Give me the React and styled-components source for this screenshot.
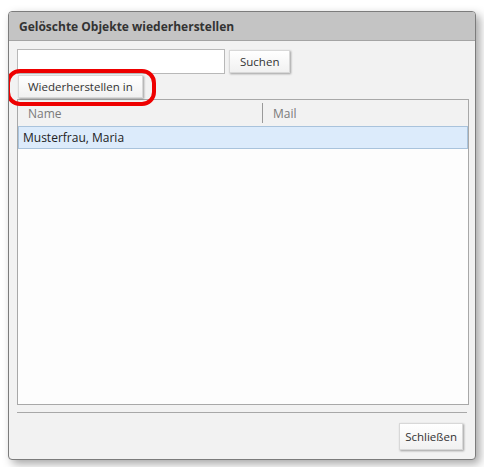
import styled, { createGlobalStyle } from 'styled-components';

const GlobalStyle = createGlobalStyle`
  html, body { margin: 0; padding: 0; background: #ffffff; }
  body { font-family: "Open Sans", "DejaVu Sans", sans-serif; }
`;

const Page = styled.div`
  width: 484px;
  height: 467px;
  padding: 11px 8px 0 8px;
  box-sizing: border-box;
`;

const Dialog = styled.div`
  width: 468px;
  height: 449px;
  box-sizing: border-box;
  border: 1px solid #7c7c7c;
  border-radius: 4px;
  background: #f2f2f2;
  box-shadow: 4px 4px 10px rgba(0, 0, 0, 0.35);
  display: flex;
  flex-direction: column;
  overflow: hidden;
`;

const Header = styled.div`
  height: 28px;
  background: #c4c4c4;
  border-bottom: 1px solid #a4a4a4;
  display: flex;
  align-items: center;
  padding-left: 10px;
  font-size: 12px;
  font-weight: 700;
  color: #333;
  flex-shrink: 0;
`;

const Body = styled.div`
  flex: 1;
  display: flex;
  flex-direction: column;
  padding: 8px 6px 8px 8px;
`;

const SearchRow = styled.div`
  display: flex;
  align-items: center;
  gap: 4px;
`;

const Input = styled.input`
  width: 208px;
  height: 25px;
  box-sizing: border-box;
  border: 1px solid #b8b8b8;
  background: #fff;
  outline: none;
`;

const Button = styled.button`
  height: ${(p) => p.h || 23}px;
  padding: 0 ${(p) => p.px || 10}px;
  box-sizing: border-box;
  border: 1px solid #d8d8d8;
  background: linear-gradient(#ffffff, #f1f1f1);
  box-shadow: 1px 1px 2px rgba(0, 0, 0, 0.35);
  font-family: "Open Sans", "DejaVu Sans", sans-serif;
  font-size: 11.5px;
  color: #333;
  cursor: pointer;
`;

const RestoreWrap = styled.div`
  position: relative;
  z-index: 2;
  margin: 1px 0 0 1px;
  align-self: flex-start;
  display: flex;
`;

const Highlight = styled.div`
  position: absolute;
  z-index: 3;
  left: -12px;
  top: -6px;
  width: 150px;
  height: 37px;
  box-sizing: border-box;
  border: 4px solid #ee0000;
  border-radius: 14px;
  pointer-events: none;
`;

const Table = styled.div`
  margin-top: 1px;
  width: 452px;
  height: 306px;
  box-sizing: border-box;
  border: 1px solid #a8a8a8;
  background: #fdfdfd;
  display: flex;
  flex-direction: column;
`;

const HeadRow = styled.div`
  height: 26px;
  display: grid;
  grid-template-columns: 245px 1fr;
  background: #f2f2f2;
  flex-shrink: 0;
`;

const HeadCell = styled.div`
  display: flex;
  align-items: center;
  padding-left: ${(p) => p.pl || 10}px;
  font-size: 12px;
  color: #7a7a7a;
  border-right: ${(p) => (p.divider ? '1px solid #9a9a9a' : 'none')};
  margin: 3px 0;
`;

const Row = styled.div`
  height: 23px;
  box-sizing: border-box;
  display: flex;
  align-items: center;
  padding-left: 4px;
  background: #dcebfb;
  border: 1px solid #a9c3dc;
  font-size: 12px;
  color: #222;
`;

const Separator = styled.div`
  margin: 7px 2px 0 0;
  border-top: 1px solid #a8a8a8;
`;

const Footer = styled.div`
  display: flex;
  justify-content: flex-end;
  padding: 10px 6px 0 0;
`;

export default function App() {
  return (
    <Page>
      <GlobalStyle />
      <Dialog>
        <Header>Gelöschte Objekte wiederherstellen</Header>
        <Body>
          <SearchRow>
            <Input />
            <Button>Suchen</Button>
          </SearchRow>
          <RestoreWrap>
            <Button px={9}>Wiederherstellen in</Button>
            <Highlight />
          </RestoreWrap>
          <Table>
            <HeadRow>
              <HeadCell divider>Name</HeadCell>
              <HeadCell>Mail</HeadCell>
            </HeadRow>
            <Row>Musterfrau, Maria</Row>
          </Table>
          <Separator />
          <Footer>
            <Button h={27} px={5}>Schließen</Button>
          </Footer>
        </Body>
      </Dialog>
    </Page>
  );
}
